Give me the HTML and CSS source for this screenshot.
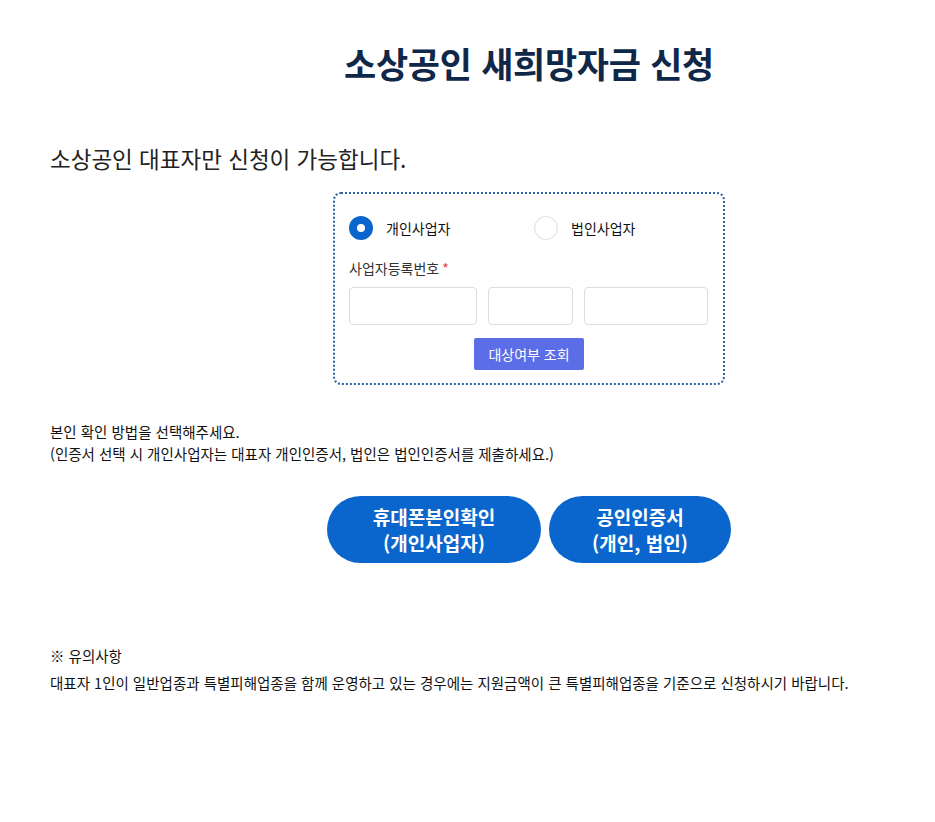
FILE: index.html
```html
<!DOCTYPE html>
<html lang="ko">
<head>
    <meta charset="UTF-8">
    <meta name="viewport" content="width=device-width, initial-scale=1.0">
    <title>소상공인 새희망자금 신청</title>
    <link rel="stylesheet" href="styles.css">
</head>
<body>
    <div class="page">
        <div class="center">
            <h1 class="title">소상공인 새희망자금 신청</h1>
        </div>

        <p class="lead">소상공인 대표자만 신청이 가능합니다.</p>

        <div class="center">
            <form class="check-box" id="checkForm">
                <div class="radio-row">
                    <label class="radio">
                        <input type="radio" name="bizType" value="personal" checked>
                        <span class="radio-mark"></span>
                        <span class="radio-text">개인사업자</span>
                    </label>
                    <label class="radio">
                        <input type="radio" name="bizType" value="corp">
                        <span class="radio-mark"></span>
                        <span class="radio-text">법인사업자</span>
                    </label>
                </div>
                <div class="field-label">사업자등록번호<span class="req">*</span></div>
                <div class="biz-number">
                    <input type="text" class="num-1" maxlength="3">
                    <input type="text" class="num-2" maxlength="2">
                    <input type="text" class="num-3" maxlength="5">
                </div>
                <div class="btn-wrap">
                    <button type="button" class="btn-check">대상여부 조회</button>
                </div>
            </form>
        </div>

        <div class="guide">
            <p>본인 확인 방법을 선택해주세요.</p>
            <p>(인증서 선택 시 개인사업자는 대표자 개인인증서, 법인은 법인인증서를 제출하세요.)</p>
        </div>

        <div class="center">
            <div class="auth-buttons">
                <button type="button" class="btn-auth btn-phone">휴대폰본인확인<br>(개인사업자)</button>
                <button type="button" class="btn-auth btn-cert">공인인증서<br>(개인, 법인)</button>
            </div>
        </div>

        <div class="notice">
            <p class="notice-title">※ 유의사항</p>
            <p>대표자 1인이 일반업종과 특별피해업종을 함께 운영하고 있는 경우에는 지원금액이 큰 특별피해업종을 기준으로 신청하시기 바랍니다.</p>
        </div>
    </div>
</body>
</html>
```

FILE: styles.css
```css
body {
    font-family: 'Noto Sans CJK KR', 'Noto Sans', sans-serif;
    background-color: #ffffff;
    color: #222;
    margin: 0;
    padding: 0;
}

p {
    margin: 0;
}

.page {
    padding: 39px 0 40px 50px;
}

.center {
    display: flex;
    justify-content: center;
    padding-left: 73px;
}

.title {
    margin: 0;
    font-size: 35px;
    font-weight: bold;
    color: #0f2748;
    line-height: 48px;
    letter-spacing: -0.3px;
}

.lead {
    margin-top: 54px;
    font-size: 22.5px;
    line-height: 34px;
    color: #222;
}

.check-box {
    margin-top: 17px;
    width: 392px;
    height: 193px;
    box-sizing: border-box;
    border: 2px dotted #2a63a8;
    border-radius: 8px;
    padding: 19px 14px 0 14px;
}

.radio-row {
    display: flex;
}

.radio {
    display: flex;
    align-items: center;
    height: 30px;
    cursor: pointer;
}

.radio:first-child {
    width: 185px;
    flex-shrink: 0;
}

.radio input {
    display: none;
}

.radio-mark {
    width: 24px;
    height: 24px;
    box-sizing: border-box;
    border: 1px solid #ddd;
    border-radius: 50%;
    background: #fff;
    margin-right: 13px;
}

.radio input:checked + .radio-mark {
    border: 8px solid #0a66cc;
}

.radio-text {
    font-size: 14px;
    color: #111;
}

.field-label {
    margin-top: 15px;
    font-size: 14px;
    color: #333;
    line-height: 20px;
}

.req {
    color: #e03b3b;
    margin-left: 3px;
}

.biz-number {
    display: flex;
    gap: 11px;
    margin-top: 9px;
}

.biz-number input {
    height: 38px;
    box-sizing: border-box;
    border: 1px solid #ddd;
    border-radius: 4px;
    padding: 0 8px;
}

.num-1 {
    width: 128px;
}

.num-2 {
    width: 85px;
}

.num-3 {
    width: 124px;
}

.btn-wrap {
    display: flex;
    justify-content: center;
    margin-top: 13px;
}

.btn-check {
    width: 110px;
    height: 32px;
    background-color: #5b6ee8;
    color: #fff;
    border: none;
    border-radius: 2px;
    font-family: inherit;
    font-size: 14px;
    cursor: pointer;
}

.guide {
    margin-top: 36px;
    font-size: 14.5px;
    line-height: 22px;
    color: #111;
}

.auth-buttons {
    display: flex;
    gap: 8px;
    margin-top: 31px;
}

.btn-auth {
    height: 67px;
    border: none;
    border-radius: 34px;
    background-color: #0a66cc;
    color: #fff;
    font-family: inherit;
    font-size: 19px;
    font-weight: bold;
    line-height: 26px;
    cursor: pointer;
}

.btn-phone {
    width: 214px;
}

.btn-cert {
    width: 182px;
}

.notice {
    margin-top: 79px;
    font-size: 14.5px;
    line-height: 27px;
    color: #111;
}
```
